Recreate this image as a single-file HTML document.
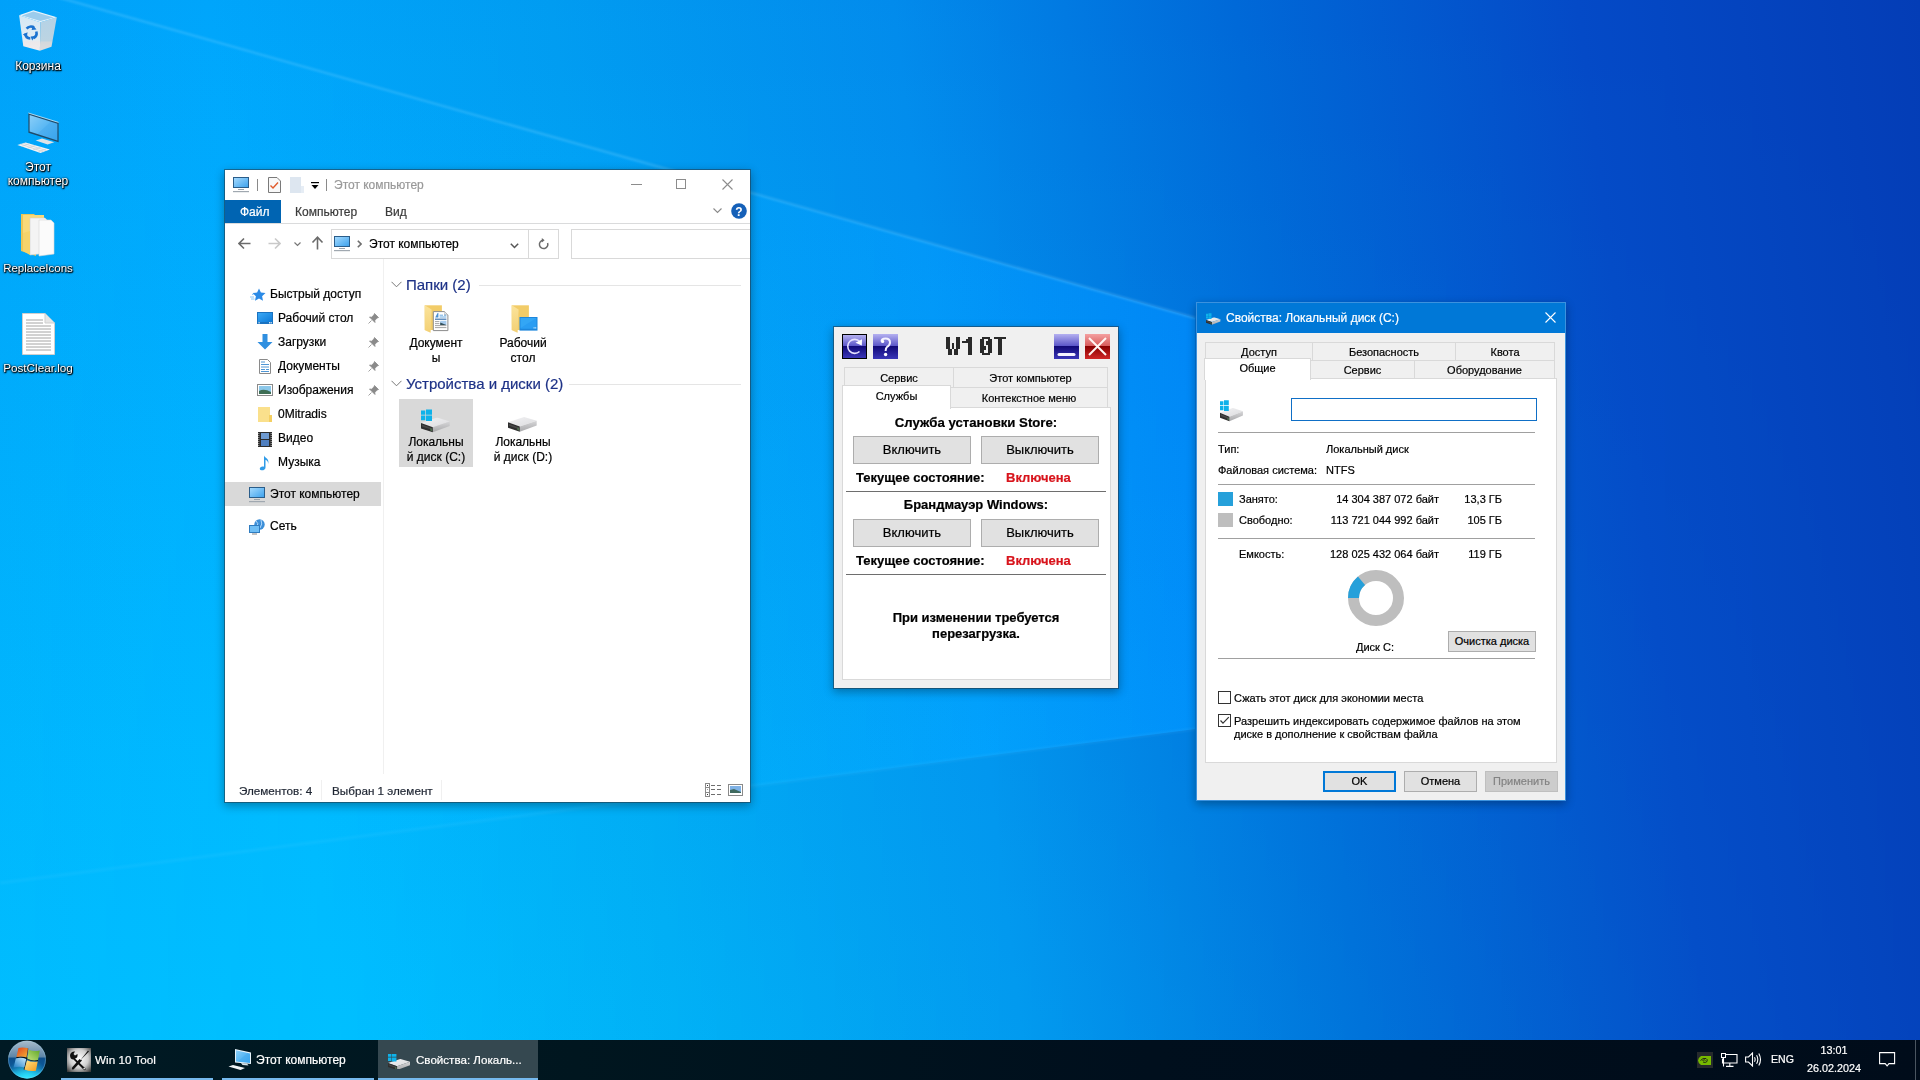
<!DOCTYPE html>
<html><head><meta charset="utf-8">
<style>
*{box-sizing:border-box}
html,body{margin:0;padding:0}
body{width:1920px;height:1080px;overflow:hidden;position:relative;font-family:"Liberation Sans",sans-serif;font-size:12px;color:#000;background:#0090ee}
.abs{position:absolute}
#wedge,#vgl{display:none}
@supports (mix-blend-mode:plus-lighter){#wedge,#vgl{display:block}}
#bg{position:absolute;left:0;top:0;width:1920px;height:1080px}
.win{position:absolute;overflow:hidden;background-clip:padding-box !important}
.t{position:absolute;white-space:nowrap;line-height:1;-webkit-text-stroke:0.2px currentColor}
/* desktop icons */
.dlabel{position:absolute;color:#fff;font-size:12px;text-align:center;line-height:14px;text-shadow:0 0 2px #000,1px 1px 1px #000,0 1px 2px #000}
</style></head>
<body>
<!-- BACKGROUND -->
<svg id="bg" width="1920" height="1080" viewBox="0 0 1920 1080">
  <defs>
    <linearGradient id="g0" gradientUnits="userSpaceOnUse" x1="0" y1="1080" x2="2023.4" y2="827.1">
      <stop offset="0" stop-color="#009ef8"/>
      <stop offset="0.1667" stop-color="#00a5fb"/>
      <stop offset="0.3333" stop-color="#019cf1"/>
      <stop offset="0.5" stop-color="#028bec"/>
      <stop offset="0.6667" stop-color="#0069d8"/>
      <stop offset="0.8333" stop-color="#044ac7"/>
      <stop offset="1" stop-color="#043db6"/>
    </linearGradient>
    <filter id="bl2" x="-10%" y="-10%" width="120%" height="120%"><feGaussianBlur stdDeviation="1.2"/></filter>
  </defs>
  <rect width="1920" height="1080" fill="url(#g0)"/>
</svg>
<div id="wedge" style="position:absolute;left:0;top:0;width:1195px;height:1080px;clip-path:polygon(0 -19px,1195px 318px,1195px 729px,0 883px);background:linear-gradient(90deg,rgb(0,0,0) 0%,rgb(0,2,3) 50%,rgb(0,8,10) 75%,rgb(0,12,16) 88%,rgb(0,18,24) 100%);mix-blend-mode:plus-lighter"></div>
<div id="vgl" style="position:absolute;left:0;top:0;width:1920px;height:1080px;background:linear-gradient(180deg,rgb(0,0,0),rgb(0,33,7));-webkit-mask-image:linear-gradient(90deg,#000,rgba(0,0,0,0.04));mask-image:linear-gradient(90deg,#000,rgba(0,0,0,0.04));mix-blend-mode:plus-lighter"></div>
<svg style="position:absolute;left:0;top:0" width="1920" height="1080">
  <defs><filter id="bl3" x="-10%" y="-50%" width="120%" height="200%"><feGaussianBlur stdDeviation="1.2"/></filter></defs>
  <line x1="0" y1="-19" x2="1195" y2="318" stroke="#8fdcff" stroke-opacity="0.3" stroke-width="2" filter="url(#bl3)"/>
  <line x1="0" y1="883" x2="1195" y2="729" stroke="#8fdcff" stroke-opacity="0.08" stroke-width="3" filter="url(#bl3)"/>
</svg>

<svg width="0" height="0" style="position:absolute"><defs>
 <linearGradient id="drR" x1="0" y1="0" x2="0" y2="1"><stop offset="0" stop-color="#d6d6d8"/><stop offset="1" stop-color="#a9a9ab"/></linearGradient>
 <linearGradient id="drT" x1="0" y1="0" x2="1" y2="1"><stop offset="0" stop-color="#f2f2f4"/><stop offset="1" stop-color="#dcdcde"/></linearGradient>
 <symbol id="drvbox" viewBox="0 0 30 16">
   <path d="M0 5.3 L16.1 0 L28.7 3.8 L11.8 9.6 Z" fill="url(#drT)"/>
   <path d="M11.8 9.6 L28.7 3.8 L28.7 8.4 L11.8 14.7 Z" fill="url(#drR)"/>
   <path d="M0 5.3 L11.8 9.6 L11.8 14.7 L0 10.8 Z" fill="#2e2e2e"/>
   <path d="M1 7 L10.8 10.6 L10.8 12.2 L1 8.8 Z" fill="#474747"/>
   <path d="M9.3 10.5 L11 11.1 L11 13.6 L9.3 13 Z" fill="#4d6e4d"/>
 </symbol>
 <symbol id="drvC" viewBox="0 0 30 24">
   <use href="#drvbox" x="0" y="8.6" width="30" height="16"/>
   <path d="M0 1.4 H4.3 V5.8 H0 Z M5 0.4 H11 V5.8 H5 Z M0 6.6 H4.3 V11.2 H0 Z M5 6.6 H11 V12 H5 Z" fill="#0fb2ea"/>
 </symbol>
</defs></svg>
<!-- DESKTOP ICONS -->
<div id="desktop">
 <svg class="abs" style="left:14px;top:6px" width="48" height="50" viewBox="0 0 48 50">
   <defs>
    <linearGradient id="rbF" x1="0" y1="0" x2="0" y2="1"><stop offset="0" stop-color="#d4e8f5"/><stop offset="0.7" stop-color="#e2edf3"/><stop offset="0.75" stop-color="#ece8ea"/><stop offset="1" stop-color="#f0ecee"/></linearGradient>
    <linearGradient id="rbR" x1="0" y1="0" x2="0" y2="1"><stop offset="0" stop-color="#b4d2e6"/><stop offset="0.7" stop-color="#bcd4e2"/><stop offset="0.75" stop-color="#d4d8dc"/><stop offset="1" stop-color="#dcdcde"/></linearGradient>
   </defs>
   <path d="M5.1 9.3 L26.4 16.2 L25.9 44.7 L9.3 40.3 Z" fill="url(#rbF)"/>
   <path d="M26.4 16.2 L42.8 11.3 L37.5 40.7 L25.9 44.7 Z" fill="url(#rbR)"/>
   <path d="M5.1 9.3 L19.4 4.2 L42.8 11.3 L26.4 16.2 Z" fill="#e8f4fb"/>
   <path d="M7.8 9.4 L19.4 5.6 L39.8 11.4 L26.4 15 Z" fill="#9cccec"/>
   <g fill="none" stroke="#1a72d0" stroke-width="2.6" stroke-linecap="butt">
     <path d="M12.6 22.6 A5.6 5.6 0 0 1 20 21.6"/>
     <path d="M22.3 25.5 A5.6 5.6 0 0 1 19.6 32"/>
     <path d="M16.3 32.5 A5.6 5.6 0 0 1 11.2 27.5"/>
   </g>
   <path d="M19 19.2 L22.5 23.6 L17.6 24 Z M21.5 30 L18.2 34.6 L16.6 30.4 Z M8.8 28.5 L13.6 26.2 L12.8 31 Z" fill="#1a72d0"/>
 </svg>
 <div class="dlabel" style="left:0;top:59px;width:76px">Корзина</div>
 <svg class="abs" style="left:14px;top:106px" width="48" height="52" viewBox="0 0 48 52">
   <defs><linearGradient id="mon" x1="0" y1="0" x2="1" y2="1"><stop offset="0" stop-color="#8ccff8"/><stop offset="0.5" stop-color="#5ab8f4"/><stop offset="0.52" stop-color="#4fb0f0"/><stop offset="1" stop-color="#38a4ee"/></linearGradient></defs>
   <path d="M21.7 34.6 L28 32.6 L40.2 36.2 L33.6 38.6 Z" fill="#dfe3e6"/>
   <path d="M14.4 7 L44.6 16.4 L44.6 36.2 L14.4 26.8 Z" fill="#1f4b6a"/>
   <path d="M15.6 9 L43.4 17.8 L43.4 34.5 L15.6 25.5 Z" fill="url(#mon)"/>
   <path d="M14.4 7 L44.6 16.4" stroke="#cfeefc" stroke-width="0.8"/>
   <path d="M3.4 39 L11.6 36.6 L35.9 43.6 L26.5 47 Z" fill="#f2f4f6"/>
   <path d="M6.4 38.1 L29.6 45.8 M9.2 37.3 L32.6 44.6 M7.8 40.4 L15.4 37.7 M13.5 42.2 L21 39.5 M19 44 L26.6 41.3 M24.4 45.8 L32 43" stroke="#c9ced3" stroke-width="0.7"/>
 </svg>
 <div class="dlabel" style="left:0;top:160px;width:76px">Этот<br>компьютер</div>
 <svg class="abs" style="left:20px;top:213px" width="36" height="44" viewBox="0 0 36 44">
   <path d="M1 1 H14 L16 3 V43 L1 38 Z" fill="#e9c659"/>
   <path d="M3 2 H24 V38 H3 Z" fill="#f8d97a"/>
   <path d="M10 5 H25 L28 8 V40 L10 42 Z" fill="#f4f4f4" stroke="#d0d0d0" stroke-width="0.6"/>
   <path d="M19 7 H31 L34 10 V41 L19 43 Z" fill="#fbfbfb" stroke="#d6d6d6" stroke-width="0.6"/>
   <path d="M3 20 L10 18 V42 L3 38 Z" fill="#f5d36b"/>
 </svg>
 <div class="dlabel" style="left:0;top:261px;width:76px;font-size:11.5px">ReplaceIcons</div>
 <svg class="abs" style="left:22px;top:313px" width="33" height="42" viewBox="0 0 33 42">
   <path d="M0.5 0.5 H23 L32.5 10 V41.5 H0.5 Z" fill="#fff" stroke="#cfcfcf"/>
   <path d="M23 0.5 V10 H32.5" fill="#e6e6e6" stroke="#cfcfcf"/>
   <g stroke="#9a9a9a" stroke-width="0.9"><path d="M4 7 H21 M4 10 H21 M4 13 H29 M4 16 H29 M4 19 H29 M4 22 H29 M4 25 H29 M4 28 H29 M4 31 H29 M4 34 H29 M4 37 H29"/></g>
 </svg>
 <div class="dlabel" style="left:0;top:361px;width:76px;font-size:11.7px">PostClear.log</div>
</div>

<!-- EXPLORER -->
<div class="win" id="explorer" style="left:224px;top:169px;width:527px;height:634px;border:1px solid rgba(40,50,60,0.5);background:#fff;box-shadow:0 3px 9px rgba(0,0,0,0.32)">
 <!-- title bar -->
 <svg class="abs" style="left:8px;top:7px" width="16" height="16" viewBox="0 0 16 16">
   <defs><linearGradient id="scr" x1="0" y1="0" x2="1" y2="1"><stop offset="0" stop-color="#a8dcff"/><stop offset="1" stop-color="#3aa0ec"/></linearGradient></defs>
   <rect x="0.5" y="0.5" width="15" height="10" fill="url(#scr)" stroke="#2a5d8a"/>
   <rect x="5" y="12" width="6" height="1" fill="#9aa4ad"/><rect x="0" y="14" width="16" height="1.2" fill="#a0a8b0"/>
 </svg>
 <div class="abs" style="left:32px;top:9px;width:1px;height:12px;background:#8a8a8a"></div>
 <svg class="abs" style="left:43px;top:7px" width="13" height="16" viewBox="0 0 13 16">
   <path d="M0.5 0.5 H9 L12.5 4 V15.5 H0.5 Z" fill="#f8f8f8" stroke="#7a7a7a"/>
   <path d="M2.5 8.5 L5 11 L10 5.5" fill="none" stroke="#e05a2b" stroke-width="1.4"/>
 </svg>
 <svg class="abs" style="left:65px;top:7px" width="14" height="16" viewBox="0 0 14 16">
   <rect x="0" y="0" width="11" height="16" fill="#dde6f0"/><rect x="11" y="9" width="3" height="7" fill="#e6edf5"/>
 </svg>
 <svg class="abs" style="left:86px;top:12px" width="8" height="8" viewBox="0 0 8 8">
   <rect x="0" y="0" width="8" height="1.2" fill="#000"/><path d="M0.5 3 H7.5 L4 7 Z" fill="#000"/>
 </svg>
 <div class="abs" style="left:101px;top:9px;width:1px;height:12px;background:#8a8a8a"></div>
 <div class="t" style="left:109px;top:9px;font-size:12px;color:#999">Этот компьютер</div>
 <div class="abs" style="left:406px;top:14px;width:11px;height:1px;background:#8c8c8c"></div>
 <div class="abs" style="left:451px;top:9px;width:10px;height:10px;border:1px solid #8c8c8c"></div>
 <svg class="abs" style="left:497px;top:9px" width="11" height="11" viewBox="0 0 11 11"><path d="M0.5 0.5 L10.5 10.5 M10.5 0.5 L0.5 10.5" stroke="#8c8c8c" stroke-width="1.1"/></svg>
 <!-- ribbon -->
 <div class="abs" style="left:0;top:30px;width:56px;height:23px;background:#0064b2"></div>
 <div class="t" style="left:15px;top:36px;color:#fff">Файл</div>
 <div class="t" style="left:70px;top:36px;color:#3b3b3b">Компьютер</div>
 <div class="t" style="left:160px;top:36px;color:#3b3b3b">Вид</div>
 <svg class="abs" style="left:488px;top:38px" width="9" height="6" viewBox="0 0 9 6"><path d="M0.5 0.5 L4.5 4.5 L8.5 0.5" fill="none" stroke="#8a8a8a" stroke-width="1.1"/></svg>
 <svg class="abs" style="left:506px;top:33px" width="16" height="16" viewBox="0 0 16 16"><circle cx="8" cy="8" r="7.8" fill="#1560b8"/><text x="8" y="12.6" text-anchor="middle" font-family="Liberation Sans" font-weight="bold" font-size="12" fill="#fff">?</text></svg>
 <div class="abs" style="left:0;top:53px;width:525px;height:1px;background:#dadbdc"></div>
 <!-- nav row -->
 <svg class="abs" style="left:13px;top:67px" width="13" height="13" viewBox="0 0 13 13"><path d="M12.5 6.5 H1.5 M6 1.5 L1 6.5 L6 11.5" fill="none" stroke="#6b6b6b" stroke-width="1.6"/></svg>
 <svg class="abs" style="left:43px;top:67px" width="13" height="13" viewBox="0 0 13 13"><path d="M0.5 6.5 H11.5 M7 1.5 L12 6.5 L7 11.5" fill="none" stroke="#c9c9c9" stroke-width="1.6"/></svg>
 <svg class="abs" style="left:69px;top:72px" width="7" height="5" viewBox="0 0 7 5"><path d="M0.5 0.5 L3.5 3.5 L6.5 0.5" fill="none" stroke="#777" stroke-width="1.2"/></svg>
 <svg class="abs" style="left:86px;top:66px" width="13" height="14" viewBox="0 0 13 14"><path d="M6.5 13.5 V2 M1.5 6.5 L6.5 1.2 L11.5 6.5" fill="none" stroke="#6b6b6b" stroke-width="1.6"/></svg>
 <div class="abs" style="left:106px;top:59px;width:228px;height:30px;border:1px solid #d9d9d9"></div>
 <div class="abs" style="left:303px;top:59px;width:1px;height:30px;background:#d9d9d9"></div>
 <svg class="abs" style="left:109px;top:66px" width="16" height="16" viewBox="0 0 16 16">
   <rect x="0.5" y="0.5" width="15" height="10" fill="url(#scr)" stroke="#2a5d8a"/>
   <rect x="5" y="12" width="6" height="1" fill="#9aa4ad"/><rect x="0" y="14" width="16" height="1.2" fill="#a0a8b0"/>
 </svg>
 <svg class="abs" style="left:132px;top:70px" width="5" height="8" viewBox="0 0 5 8"><path d="M0.8 0.8 L4 4 L0.8 7.2" fill="none" stroke="#6e6e6e" stroke-width="1.6"/></svg>
 <div class="t" style="left:144px;top:68px;color:#000">Этот компьютер</div>
 <svg class="abs" style="left:285px;top:73px" width="9" height="6" viewBox="0 0 9 6"><path d="M0.8 0.8 L4.5 4.5 L8.2 0.8" fill="none" stroke="#555" stroke-width="1.5"/></svg>
 <svg class="abs" style="left:313px;top:68px" width="12" height="12" viewBox="0 0 12 12"><path d="M5.2 2.2 A4.2 4.2 0 1 0 9.6 5" fill="none" stroke="#6b6b6b" stroke-width="1.5"/><path d="M3.8 0 L6.6 2.3 L3.8 4.6 Z" fill="#6b6b6b"/></svg>
 <div class="abs" style="left:346px;top:59px;width:181px;height:30px;border:1px solid #d9d9d9;border-right:none"></div>
 <!-- nav pane -->
 <div class="abs" style="left:158px;top:89px;width:1px;height:515px;background:#f0f0f0"></div>
 <svg class="abs" style="left:25px;top:118px" width="16" height="14" viewBox="0 0 16 14"><path d="M9 0.5 L10.9 4.6 L15.5 5.1 L12.1 8.2 L13 12.8 L9 10.5 L5 12.8 L5.9 8.2 L2.5 5.1 L7.1 4.6 Z" fill="#2b8ae6"/><path d="M0 9 H4 M1 11 H4.5 M2 6.5 H3.5" stroke="#7fc1f5" stroke-width="0.9"/></svg>
 <div class="t" style="left:45px;top:118px;color:#000">Быстрый доступ</div>
 <svg class="abs" style="left:32px;top:142px" width="16" height="12" viewBox="0 0 16 12"><defs><linearGradient id="dsk" x1="0" y1="0" x2="1" y2="1"><stop offset="0" stop-color="#3ba8f5"/><stop offset="1" stop-color="#0c7ad8"/></linearGradient></defs><rect x="0" y="0" width="16" height="12" fill="#1a72c0"/><rect x="1" y="1" width="14" height="9" fill="url(#dsk)"/><rect x="1.5" y="10.2" width="1.2" height="1.2" fill="#fff"/><rect x="12" y="10.2" width="1.2" height="1.2" fill="#fff"/><rect x="13.6" y="10.2" width="1.2" height="1.2" fill="#fff"/></svg>
 <div class="t" style="left:53px;top:142px;color:#000">Рабочий стол</div>
 <svg class="abs" style="left:32px;top:164px" width="16" height="16" viewBox="0 0 16 16"><path d="M5.5 0 H10.5 V8 H15.5 L8 15.5 L0.5 8 H5.5 Z" fill="#2f8fe0"/></svg>
 <div class="t" style="left:53px;top:166px;color:#000">Загрузки</div>
 <svg class="abs" style="left:34px;top:189px" width="12" height="15" viewBox="0 0 12 15"><path d="M0.5 0.5 H8.5 L11.5 3.5 V14.5 H0.5 Z" fill="#fff" stroke="#8a8a8a"/><path d="M2 3 H6 M2 5.5 H10 M2 8 H10 M2 10.5 H6 M7 10.5 H10 M2 12.5 H10" stroke="#3b8ad0" stroke-width="0.9"/></svg>
 <div class="t" style="left:53px;top:190px;color:#000">Документы</div>
 <svg class="abs" style="left:32px;top:214px" width="16" height="12" viewBox="0 0 16 12"><rect x="0.5" y="0.5" width="15" height="11" fill="#fff" stroke="#8a8a8a"/><rect x="2" y="2" width="12" height="8" fill="#8cc8ea"/><path d="M2 7 Q7 4 14 8 V10 H2 Z" fill="#3e6e55"/></svg>
 <div class="t" style="left:53px;top:214px;color:#000">Изображения</div>
 <svg class="abs" style="left:33px;top:237px" width="14" height="15" viewBox="0 0 14 15"><rect x="0" y="0" width="12" height="15" fill="#fae08c"/><rect x="11" y="8" width="3" height="7" fill="#f4cf62"/></svg>
 <div class="t" style="left:53px;top:238px;color:#000">0Mitradis</div>
 <svg class="abs" style="left:33px;top:262px" width="14" height="15" viewBox="0 0 14 15"><rect x="0" y="0" width="14" height="15" fill="#2c2c2c"/><rect x="3" y="1" width="8" height="6" fill="#6e9ad0"/><rect x="3" y="8" width="8" height="6" fill="#4f7fc0"/><path d="M0.8 1 V14 M13.2 1 V14" stroke="#ddd" stroke-width="0.8" stroke-dasharray="1 1"/></svg>
 <div class="t" style="left:53px;top:262px;color:#000">Видео</div>
 <svg class="abs" style="left:34px;top:285px" width="12" height="16" viewBox="0 0 12 16"><path d="M5 0.5 C6 3 11 4 9 9 C9.5 6.5 7.5 5 6.5 4.8 V12.5 C6.5 14.5 4.5 15.5 2.5 15.3 C0.5 15 0.3 13.3 1.5 12.2 C2.6 11.2 4.3 11.3 5 11.8 V0.5 Z" fill="#2f9be8"/></svg>
 <div class="t" style="left:53px;top:286px;color:#000">Музыка</div>
 <!-- pins -->
 <svg class="abs" style="left:143px;top:143px" width="11" height="11" viewBox="0 0 11 11"><path d="M6.5 0.5 L10.5 4.5 L9 5 L6.8 7.5 L7 9.5 L1.5 4 L3.5 4.2 L6 2 Z M3.5 7.5 L0.5 10.5" fill="#8a8a8a" stroke="#8a8a8a" stroke-width="0.8"/></svg>
 <svg class="abs" style="left:143px;top:167px" width="11" height="11" viewBox="0 0 11 11"><path d="M6.5 0.5 L10.5 4.5 L9 5 L6.8 7.5 L7 9.5 L1.5 4 L3.5 4.2 L6 2 Z M3.5 7.5 L0.5 10.5" fill="#8a8a8a" stroke="#8a8a8a" stroke-width="0.8"/></svg>
 <svg class="abs" style="left:143px;top:191px" width="11" height="11" viewBox="0 0 11 11"><path d="M6.5 0.5 L10.5 4.5 L9 5 L6.8 7.5 L7 9.5 L1.5 4 L3.5 4.2 L6 2 Z M3.5 7.5 L0.5 10.5" fill="#8a8a8a" stroke="#8a8a8a" stroke-width="0.8"/></svg>
 <svg class="abs" style="left:143px;top:215px" width="11" height="11" viewBox="0 0 11 11"><path d="M6.5 0.5 L10.5 4.5 L9 5 L6.8 7.5 L7 9.5 L1.5 4 L3.5 4.2 L6 2 Z M3.5 7.5 L0.5 10.5" fill="#8a8a8a" stroke="#8a8a8a" stroke-width="0.8"/></svg>
 <div class="abs" style="left:0;top:312px;width:156px;height:24px;background:#d9d9d9"></div>
 <svg class="abs" style="left:24px;top:317px" width="16" height="16" viewBox="0 0 16 16">
   <rect x="0.5" y="0.5" width="15" height="10" fill="url(#scr)" stroke="#2a5d8a"/>
   <rect x="5" y="12" width="6" height="1" fill="#9aa4ad"/><rect x="0" y="14" width="16" height="1.2" fill="#a0a8b0"/>
 </svg>
 <div class="t" style="left:45px;top:318px;color:#000">Этот компьютер</div>
 <svg class="abs" style="left:24px;top:349px" width="16" height="16" viewBox="0 0 16 16"><circle cx="10.5" cy="5.5" r="5.2" fill="#3c8fd8"/><path d="M7 2 Q10 4 8 8 M12 1 Q14 5 11 9" stroke="#bfe0ff" stroke-width="0.9" fill="none"/><rect x="0.5" y="6.5" width="10" height="7" fill="#6fbef5" stroke="#2f7cc0"/><rect x="3" y="14.5" width="5" height="1" fill="#888"/></svg>
 <div class="t" style="left:45px;top:350px;color:#000">Сеть</div>
 <!-- content -->
 <svg class="abs" style="left:166px;top:111px" width="11" height="7" viewBox="0 0 11 7"><path d="M0.5 0.8 L5.5 5.8 L10.5 0.8" fill="none" stroke="#777" stroke-width="1"/></svg>
 <div class="t" style="left:181px;top:107px;font-size:15px;color:#1e3287">Папки (2)</div>
 <div class="abs" style="left:254px;top:115px;width:262px;height:1px;background:#e5e5e5"></div>
 <svg class="abs" style="left:193px;top:130px" width="32" height="36" viewBox="0 0 32 36">
   <defs><linearGradient id="fldF" x1="0" y1="0" x2="0" y2="1"><stop offset="0" stop-color="#fbe39a"/><stop offset="1" stop-color="#f3d074"/></linearGradient></defs>
   <path d="M6.7 5.3 H23.9 V30 H6.7 Z" fill="#f2cc68"/>
   <path d="M6.7 5.3 L13.6 9.6 L12.6 32.8 L6.9 30.2 Z" fill="url(#fldF)"/>
   <path d="M15.3 11.6 H26.6 L29.9 14.9 V30.6 H15.3 Z" fill="#fff" stroke="#8c8c8c" stroke-width="1"/>
   <path d="M26.6 11.6 V14.9 H29.9" fill="#e6e6e6" stroke="#b0b0b0" stroke-width="0.6"/>
   <path d="M17.2 17.6 L19.6 13 L20.4 13 L20.4 17.6 Z" fill="#4a8fd0"/>
   <path d="M21.6 15.2 H25 M26 15.2 H28.2 M21.6 17 H28.4" stroke="#5aa0dc" stroke-width="0.9"/>
   <rect x="17" y="18.6" width="11.4" height="1.2" fill="#3c74b0"/>
   <path d="M17 21.6 H21.4 M17 23.6 H21.4 M17 25.6 H28.4 M17 27.6 H28.4" stroke="#9a9a9a" stroke-width="0.9"/>
   <rect x="22.2" y="20.8" width="6.2" height="4.2" fill="#a8ccee"/>
   <path d="M22.2 22.4 Q24 23 28.4 25 H22.2 Z" fill="#34505a"/>
 </svg>
 <div class="t" style="left:171px;top:167px;width:80px;text-align:center;color:#000">Документ</div>
 <div class="t" style="left:171px;top:182px;width:80px;text-align:center;color:#000">ы</div>
 <svg class="abs" style="left:280px;top:130px" width="34" height="36" viewBox="0 0 34 36">
   <path d="M6.7 5.3 H23.9 V30 H6.7 Z" fill="#f2cc68"/>
   <path d="M6.7 5.3 L13.6 9.6 L12.6 32.8 L6.9 30.2 Z" fill="url(#fldF)"/>
   <rect x="14.5" y="17" width="18" height="13.6" fill="#1d86dc"/>
   <path d="M15.5 18 H31.5 V28.8 H15.5 Z" fill="#2a9df2"/>
   <path d="M15.5 18 H31.5 L15.5 28 Z" fill="#3aabf6" opacity="0.6"/>
   <rect x="28.6" y="27.4" width="1" height="1" fill="#fff"/><rect x="30.2" y="27.4" width="1" height="1" fill="#fff"/>
 </svg>
 <div class="t" style="left:258px;top:167px;width:80px;text-align:center;color:#000">Рабочий</div>
 <div class="t" style="left:258px;top:182px;width:80px;text-align:center;color:#000">стол</div>
 <svg class="abs" style="left:166px;top:210px" width="11" height="7" viewBox="0 0 11 7"><path d="M0.5 0.8 L5.5 5.8 L10.5 0.8" fill="none" stroke="#777" stroke-width="1"/></svg>
 <div class="t" style="left:181px;top:206px;font-size:15px;color:#1e3287">Устройства и диски (2)</div>
 <div class="abs" style="left:344px;top:214px;width:172px;height:1px;background:#e5e5e5"></div>
 <div class="abs" style="left:174px;top:229px;width:74px;height:68px;background:#d9d9d9"></div>
 <svg class="abs" style="left:196px;top:239px" width="30" height="24" viewBox="0 0 30 24"><use href="#drvC"/></svg>
 <div class="t" style="left:171px;top:266px;width:80px;text-align:center;color:#000">Локальны</div>
 <div class="t" style="left:171px;top:281px;width:80px;text-align:center;color:#000">й диск (C:)</div>
 <svg class="abs" style="left:283px;top:247px" width="30" height="16" viewBox="0 0 30 16"><use href="#drvbox"/></svg>
 <div class="t" style="left:258px;top:266px;width:80px;text-align:center;color:#000">Локальны</div>
 <div class="t" style="left:258px;top:281px;width:80px;text-align:center;color:#000">й диск (D:)</div>
 <!-- status bar -->
 <div class="t" style="left:14px;top:615px;color:#1f2633;font-size:11.7px">Элементов: 4</div>
 <div class="abs" style="left:96px;top:610px;width:1px;height:20px;background:#f0f0f0"></div>
 <div class="t" style="left:107px;top:615px;color:#1f2633;font-size:11.7px">Выбран 1 элемент</div>
 <div class="abs" style="left:216px;top:610px;width:1px;height:20px;background:#f0f0f0"></div>
 <svg class="abs" style="left:480px;top:613px" width="17" height="14" viewBox="0 0 17 14" shape-rendering="crispEdges"><path d="M0 0 H5 V14 H0 Z M1 1 V4 H4 V1 Z M1 5 V9 H4 V5 Z M1 10 V13 H4 V10 Z" fill="#8a8a8a" fill-rule="evenodd"/><rect x="2" y="2" width="1" height="1" fill="#333"/><rect x="2" y="6" width="1" height="1" fill="#999"/><rect x="2" y="11" width="1" height="1" fill="#333"/><path d="M6 2 H10 V3 H6 Z M12 2 H16 V3 H12 Z M6 6 H10 V7 H6 Z M12 6 H16 V7 H12 Z M6 11 H10 V12 H6 Z M12 11 H16 V12 H12 Z" fill="#6e6e6e"/></svg>
 <svg class="abs" style="left:503px;top:614px" width="15" height="12" viewBox="0 0 15 12" shape-rendering="crispEdges"><path d="M0 0 H15 V12 H0 Z M1 1 V11 H14 V1 Z" fill="#8a8a8a" fill-rule="evenodd"/><rect x="1" y="1" width="13" height="10" fill="#fff"/><rect x="2" y="2" width="11" height="7" fill="#7fb2e6"/><path d="M2 6 L6 5 L13 8 V9 H2 Z" fill="#3f6a5f" shape-rendering="geometricPrecision"/></svg>
</div>

<!-- W10T -->
<div class="win" id="w10t" style="left:833px;top:326px;width:286px;height:363px;border:1px solid rgba(40,50,60,0.5);background:#f0f0f0;box-shadow:0 3px 9px rgba(0,0,0,0.32)">
 <svg class="abs" style="left:0;top:0;width:0;height:0"><defs>
  <linearGradient id="bb" x1="0" y1="0" x2="0" y2="1"><stop offset="0" stop-color="#b4b0f0"/><stop offset="0.48" stop-color="#5a55c8"/><stop offset="0.5" stop-color="#120a78"/><stop offset="1" stop-color="#3a36b8"/></linearGradient>
  <linearGradient id="rb" x1="0" y1="0" x2="0" y2="1"><stop offset="0" stop-color="#f4a0a0"/><stop offset="0.48" stop-color="#d85a5a"/><stop offset="0.5" stop-color="#8a0000"/><stop offset="1" stop-color="#d02828"/></linearGradient>
 </defs></svg>
 <svg class="abs" style="left:8px;top:7px" width="25" height="25" viewBox="0 0 25 25"><rect x="0" y="0" width="25" height="25" fill="#000"/><rect x="1" y="1" width="23" height="23" fill="url(#bb)"/><path d="M17.5 17.5 A7 7 0 1 1 17.8 7.5" fill="none" stroke="#e6e2ff" stroke-width="1.6"/><path d="M13.5 8.8 L20 5.2 L19.8 11.5 Z" fill="#fff"/></svg>
 <svg class="abs" style="left:39px;top:7px" width="25" height="25" viewBox="0 0 25 25"><rect x="0" y="0" width="25" height="25" fill="url(#bb)"/><path d="M8.5 7.5 Q8.5 4.5 12.5 4.5 Q17 4.5 17 8.5 Q17 11 14 13 Q12.8 14 12.6 17" fill="none" stroke="#f4f2ff" stroke-width="2"/><circle cx="9.6" cy="7.4" r="1.6" fill="#fff"/><circle cx="12.6" cy="20.5" r="1.7" fill="#fff"/></svg>
 <svg class="abs" style="left:112px;top:10px" width="62" height="18" viewBox="0 0 62 18" shape-rendering="crispEdges">
   <g fill="#2a2a2a">
    <rect x="0" y="0" width="4" height="12"/><rect x="10" y="0" width="4" height="12"/><rect x="6" y="6" width="2" height="6"/><rect x="2" y="12" width="4" height="6"/><rect x="8" y="12" width="4" height="6"/>
    <rect x="22" y="0" width="4" height="18"/><rect x="16" y="4" width="6" height="2"/><rect x="20" y="2" width="2" height="2"/>
    <rect x="36" y="0" width="8" height="2"/><rect x="36" y="16" width="8" height="2"/><rect x="34" y="2" width="4" height="14"/><rect x="42" y="2" width="4" height="14"/><rect x="40" y="4" width="2" height="4"/><rect x="38" y="9" width="2" height="4"/>
    <rect x="48" y="0" width="12" height="2"/><rect x="52" y="2" width="4" height="16"/>
   </g>
 </svg>
 <svg class="abs" style="left:220px;top:7px" width="25" height="25" viewBox="0 0 25 25"><rect x="0" y="0" width="25" height="25" fill="url(#bb)"/><rect x="3.5" y="19" width="18" height="3" rx="1.5" fill="#f4f2ff"/></svg>
 <svg class="abs" style="left:251px;top:7px" width="25" height="25" viewBox="0 0 25 25"><rect x="0" y="0" width="25" height="25" fill="url(#rb)"/><path d="M4 4 L21 21 M21 4 L4 21" stroke="#fff6f4" stroke-width="2"/></svg>
 <!-- tabs -->
 <div class="abs" style="left:10px;top:40px;width:110px;height:21px;background:#f0f0f0;border:1px solid #d9d9d9;border-bottom:none"></div>
 <div class="abs" style="left:119px;top:40px;width:155px;height:21px;background:#f0f0f0;border:1px solid #d9d9d9;border-bottom:none"></div>
 <div class="t" style="left:10px;top:46px;width:110px;text-align:center;font-size:11px;color:#000">Сервис</div>
 <div class="t" style="left:119px;top:46px;width:155px;text-align:center;font-size:11px;color:#000">Этот компьютер</div>
 <div class="abs" style="left:8px;top:80px;width:269px;height:273px;background:#fff;border:1px solid #d9d9d9"></div>
 <div class="abs" style="left:116px;top:60px;width:158px;height:21px;background:#f0f0f0;border:1px solid #d9d9d9"></div>
 <div class="t" style="left:116px;top:66px;width:158px;text-align:center;font-size:11px;color:#000">Контекстное меню</div>
 <div class="abs" style="left:8px;top:58px;width:109px;height:24px;background:#fff;border:1px solid #d9d9d9;border-bottom:none"></div>
 <div class="t" style="left:8px;top:64px;width:109px;text-align:center;font-size:11px;color:#000">Службы</div>
 <!-- content -->
 <div class="t" style="left:0;top:89px;width:284px;text-align:center;font-size:13.2px;font-weight:bold;color:#000">Служба установки Store:</div>
 <div class="abs" style="left:19px;top:109px;width:118px;height:28px;background:#e1e1e1;border:1px solid #adadad"></div>
 <div class="t" style="left:19px;top:116px;width:118px;text-align:center;font-size:13px;color:#000">Включить</div>
 <div class="abs" style="left:147px;top:109px;width:118px;height:28px;background:#e1e1e1;border:1px solid #adadad"></div>
 <div class="t" style="left:147px;top:116px;width:118px;text-align:center;font-size:13px;color:#000">Выключить</div>
 <div class="t" style="left:22px;top:144px;font-size:13px;font-weight:bold;color:#000">Текущее состояние:</div>
 <div class="t" style="left:172px;top:144px;font-size:13px;font-weight:bold;color:#d8141c">Включена</div>
 <div class="abs" style="left:12px;top:164px;width:260px;height:1px;background:#6e6e6e"></div>
 <div class="t" style="left:0;top:171px;width:284px;text-align:center;font-size:13px;font-weight:bold;color:#000">Брандмауэр Windows:</div>
 <div class="abs" style="left:19px;top:192px;width:118px;height:28px;background:#e1e1e1;border:1px solid #adadad"></div>
 <div class="t" style="left:19px;top:199px;width:118px;text-align:center;font-size:13px;color:#000">Включить</div>
 <div class="abs" style="left:147px;top:192px;width:118px;height:28px;background:#e1e1e1;border:1px solid #adadad"></div>
 <div class="t" style="left:147px;top:199px;width:118px;text-align:center;font-size:13px;color:#000">Выключить</div>
 <div class="t" style="left:22px;top:227px;font-size:13px;font-weight:bold;color:#000">Текущее состояние:</div>
 <div class="t" style="left:172px;top:227px;font-size:13px;font-weight:bold;color:#d8141c">Включена</div>
 <div class="abs" style="left:12px;top:247px;width:260px;height:1px;background:#6e6e6e"></div>
 <div class="t" style="left:0;top:283px;width:284px;text-align:center;font-size:13px;font-weight:bold;color:#000;line-height:16px">При изменении требуется<br>перезагрузка.</div>
</div>

<!-- PROPERTIES -->
<div class="win" id="props" style="left:1196px;top:302px;width:370px;height:499px;border:1px solid #3c92de;background:#f0f0f0;box-shadow:0 3px 9px rgba(0,0,0,0.32)">
 <div class="abs" style="left:0;top:0;width:368px;height:30px;background:#0078d7"></div>
 <svg class="abs" style="left:9px;top:10px" width="15" height="12" viewBox="0 0 30 24"><use href="#drvC"/></svg>
 <div class="t" style="left:29px;top:9px;font-size:12px;color:#fff">Свойства: Локальный диск (C:)</div>
 <svg class="abs" style="left:348px;top:9px" width="11" height="11" viewBox="0 0 11 11"><path d="M0.5 0.5 L10.5 10.5 M10.5 0.5 L0.5 10.5" stroke="#fff" stroke-width="1.1"/></svg>
 <!-- tabs row1 -->
 <div class="abs" style="left:8px;top:39px;width:108px;height:19px;background:#f0f0f0;border:1px solid #d9d9d9;border-bottom:none"></div>
 <div class="abs" style="left:115px;top:39px;width:144px;height:19px;background:#f0f0f0;border:1px solid #d9d9d9;border-bottom:none"></div>
 <div class="abs" style="left:258px;top:39px;width:100px;height:19px;background:#f0f0f0;border:1px solid #d9d9d9;border-bottom:none"></div>
 <div class="t" style="left:8px;top:44px;width:108px;text-align:center;font-size:11px;color:#000">Доступ</div>
 <div class="t" style="left:115px;top:44px;width:144px;text-align:center;font-size:11px;color:#000">Безопасность</div>
 <div class="t" style="left:258px;top:44px;width:100px;text-align:center;font-size:11px;color:#000">Квота</div>
 <!-- panel -->
 <div class="abs" style="left:8px;top:75px;width:352px;height:385px;background:#fff;border:1px solid #d9d9d9"></div>
 <div class="abs" style="left:113px;top:57px;width:105px;height:19px;background:#f0f0f0;border:1px solid #d9d9d9"></div>
 <div class="abs" style="left:217px;top:57px;width:141px;height:19px;background:#f0f0f0;border:1px solid #d9d9d9"></div>
 <div class="t" style="left:113px;top:62px;width:105px;text-align:center;font-size:11px;color:#000">Сервис</div>
 <div class="t" style="left:217px;top:62px;width:141px;text-align:center;font-size:11px;color:#000">Оборудование</div>
 <div class="abs" style="left:7px;top:55px;width:107px;height:22px;background:#fff;border:1px solid #d9d9d9;border-bottom:none"></div>
 <div class="t" style="left:7px;top:60px;width:107px;text-align:center;font-size:11px;color:#000">Общие</div>
 <!-- content -->
 <svg class="abs" style="left:23px;top:97px" width="24" height="22" viewBox="0 0 30 24" preserveAspectRatio="none"><use href="#drvC"/></svg>
 <div class="abs" style="left:94px;top:95px;width:246px;height:23px;border:1px solid #0f6fc6;background:#fff"></div>
 <div class="abs" style="left:21px;top:129px;width:317px;height:1px;background:#a0a0a0"></div>
 <div class="t" style="left:21px;top:141px;font-size:11px;color:#000">Тип:</div>
 <div class="t" style="left:129px;top:141px;font-size:11px;color:#000">Локальный диск</div>
 <div class="t" style="left:21px;top:162px;font-size:11px;color:#000">Файловая система:</div>
 <div class="t" style="left:129px;top:162px;font-size:11px;color:#000">NTFS</div>
 <div class="abs" style="left:21px;top:181px;width:317px;height:1px;background:#a0a0a0"></div>
 <div class="abs" style="left:21px;top:189px;width:15px;height:14px;background:#26a0da"></div>
 <div class="t" style="left:42px;top:191px;font-size:11px;color:#000">Занято:</div>
 <div class="t" style="left:100px;top:191px;width:142px;text-align:right;font-size:11px;color:#000">14 304 387 072 байт</div>
 <div class="t" style="left:250px;top:191px;width:55px;text-align:right;font-size:11px;color:#000">13,3 ГБ</div>
 <div class="abs" style="left:21px;top:210px;width:15px;height:14px;background:#bebebe"></div>
 <div class="t" style="left:42px;top:212px;font-size:11px;color:#000">Свободно:</div>
 <div class="t" style="left:100px;top:212px;width:142px;text-align:right;font-size:11px;color:#000">113 721 044 992 байт</div>
 <div class="t" style="left:250px;top:212px;width:55px;text-align:right;font-size:11px;color:#000">105 ГБ</div>
 <div class="abs" style="left:21px;top:235px;width:317px;height:1px;background:#a0a0a0"></div>
 <div class="t" style="left:42px;top:246px;font-size:11px;color:#000">Емкость:</div>
 <div class="t" style="left:100px;top:246px;width:142px;text-align:right;font-size:11px;color:#000">128 025 432 064 байт</div>
 <div class="t" style="left:250px;top:246px;width:55px;text-align:right;font-size:11px;color:#000">119 ГБ</div>
 <svg class="abs" style="left:150px;top:266px" width="58" height="58" viewBox="0 0 58 58">
   <circle cx="29" cy="29" r="22.5" fill="none" stroke="#bebebe" stroke-width="11"/>
   <path d="M6.5 29 A22.5 22.5 0 0 1 14.5 11.8" fill="none" stroke="#26a0da" stroke-width="11"/>
 </svg>
 <div class="t" style="left:128px;top:339px;width:100px;text-align:center;font-size:11px;color:#000">Диск C:</div>
 <div class="abs" style="left:251px;top:328px;width:88px;height:21px;background:#e1e1e1;border:1px solid #adadad"></div>
 <div class="t" style="left:251px;top:333px;width:88px;text-align:center;font-size:11px;color:#000">Очистка диска</div>
 <div class="abs" style="left:21px;top:355px;width:317px;height:1px;background:#a0a0a0"></div>
 <div class="abs" style="left:21px;top:388px;width:13px;height:13px;border:1px solid #333;background:#fff"></div>
 <div class="t" style="left:37px;top:390px;font-size:11px;color:#000">Сжать этот диск для экономии места</div>
 <div class="abs" style="left:21px;top:411px;width:13px;height:13px;border:1px solid #333;background:#fff"></div>
 <svg class="abs" style="left:22px;top:412px" width="11" height="11" viewBox="0 0 11 11"><path d="M1.5 5.5 L4 8.2 L9.8 2.2" fill="none" stroke="#333" stroke-width="1.2"/></svg>
 <div class="t" style="left:37px;top:412px;font-size:11px;color:#000;line-height:12.5px">Разрешить индексировать содержимое файлов на этом<br>диске в дополнение к свойствам файла</div>
 <!-- buttons -->
 <div class="abs" style="left:126px;top:468px;width:73px;height:21px;background:#e1e1e1;border:2px solid #0078d7"></div>
 <div class="t" style="left:126px;top:473px;width:73px;text-align:center;font-size:11px;color:#000">OK</div>
 <div class="abs" style="left:207px;top:468px;width:73px;height:21px;background:#e1e1e1;border:1px solid #adadad"></div>
 <div class="t" style="left:207px;top:473px;width:73px;text-align:center;font-size:11px;color:#000">Отмена</div>
 <div class="abs" style="left:288px;top:468px;width:73px;height:21px;background:#cccccc;border:1px solid #bfbfbf"></div>
 <div class="t" style="left:288px;top:473px;width:73px;text-align:center;font-size:11px;color:#838383">Применить</div>
</div>

<!-- TASKBAR -->
<div id="taskbar" class="abs" style="left:0;top:1040px;width:1920px;height:40px;background:linear-gradient(90deg,#001a24 0%,#00161f 30%,#000f1d 60%,#000c1a 100%)">
 <svg class="abs" style="left:4px;top:0px" width="46" height="40" viewBox="0 0 46 40">
   <defs>
     <linearGradient id="orbB" x1="0" y1="0" x2="0" y2="1"><stop offset="0" stop-color="#a9bccb"/><stop offset="0.42" stop-color="#5f86a8"/><stop offset="0.47" stop-color="#0d4f8c"/><stop offset="0.74" stop-color="#0d5c9c"/><stop offset="0.9" stop-color="#12a6dc"/><stop offset="1" stop-color="#18d6f8"/></linearGradient>
     <radialGradient id="orbG" cx="0.5" cy="1" r="0.55"><stop offset="0" stop-color="#30e8ff" stop-opacity="0.9"/><stop offset="1" stop-color="#30e8ff" stop-opacity="0"/></radialGradient>
     <linearGradient id="fr" x1="0" y1="0" x2="1" y2="1"><stop offset="0" stop-color="#e0401e"/><stop offset="1" stop-color="#f5b335"/></linearGradient>
     <linearGradient id="fg" x1="1" y1="0" x2="0" y2="1"><stop offset="0" stop-color="#5ea628"/><stop offset="1" stop-color="#c2e27a"/></linearGradient>
     <linearGradient id="fb" x1="0" y1="1" x2="1" y2="0"><stop offset="0" stop-color="#1f7cc4"/><stop offset="1" stop-color="#c8ecff"/></linearGradient>
     <linearGradient id="fy" x1="1" y1="1" x2="0" y2="0"><stop offset="0" stop-color="#f39a1a"/><stop offset="1" stop-color="#ffe68a"/></linearGradient>
   </defs>
   <circle cx="23" cy="19.6" r="18.9" fill="url(#orbB)"/>
   <circle cx="23" cy="19.6" r="18.9" fill="url(#orbG)"/>
   <circle cx="23" cy="19.6" r="18.5" fill="none" stroke="#9fd6ee" stroke-opacity="0.45" stroke-width="0.8"/>
   <path d="M12.4 17.6 Q18 16.4 22.8 18.2 Q28 21 34 20.6 M23.6 8.4 L20.4 29.6" stroke="#06121c" stroke-width="1.4" fill="none"/>
   <path d="M14.5 8 Q19 7 24 8.3 L22.5 17.4 Q18 16 12.4 17 Z" fill="url(#fr)"/>
   <path d="M24.8 9.8 Q30 11.8 35.8 10.4 L34 20 Q28.6 21.4 23.3 18.8 Z" fill="url(#fg)"/>
   <path d="M11.8 18.4 Q17 17.1 22.2 19 L20.4 27.4 Q15 26.2 9.6 27.6 Z" fill="url(#fb)"/>
   <path d="M23 20.2 Q28.2 22.6 33.7 21.4 L31.9 30.8 Q26 31.8 20.4 29.6 Z" fill="url(#fy)"/>
 </svg>
 <!-- Win 10 Tool -->
 <svg class="abs" style="left:67px;top:8px" width="24" height="24" viewBox="0 0 24 24">
   <defs><radialGradient id="tg" cx="0.5" cy="0.45" r="0.7"><stop offset="0" stop-color="#ffffff"/><stop offset="0.55" stop-color="#cfcfcf"/><stop offset="1" stop-color="#3a3a3a"/></radialGradient></defs>
   <rect width="24" height="24" fill="url(#tg)"/>
   <path d="M3 7 Q4 3 8 3.5 L6.5 6 L8 7.5 L10.5 6 Q11 10 8 10.5 L18 20 Q19.5 21.5 18 22 Q17 22.5 16 21 L6.5 11.5 Q3 11.5 3 7 Z" fill="#111"/>
   <path d="M21 2.5 L22 3.5 L14 11.5 L15 12.5 L7 21 Q5.5 22 5 21 Q4.5 20 5.5 19 L12.5 11 L13.5 12 Z" fill="#111"/>
   <circle cx="17.2" cy="20.6" r="0.9" fill="#ddd"/>
 </svg>
 <div class="t" style="left:95px;top:14px;font-size:11.7px;color:#fff">Win 10 Tool</div>
 <div class="abs" style="left:61px;top:38px;width:152px;height:2px;background:#76b9ed"></div>
 <!-- This PC -->
 <svg class="abs" style="left:228px;top:8px" width="24" height="24" viewBox="0 0 24 24">
   <path d="M7 1 L23 4.5 L23 16 L7 14.5 Z" fill="#e6f3fb"/>
   <path d="M8 2.3 L22 5.5 L22 15 L8 13.6 Z" fill="url(#mon)"/>
   <path d="M13 15 L19 15.6 L20.5 17.5 L14.5 17 Z" fill="#d9e4ea"/>
   <path d="M0.5 18.5 L5 17 L17 20 L12.5 22 Z" fill="#f1f5f8"/>
 </svg>
 <div class="t" style="left:256px;top:14px;font-size:12px;color:#fff">Этот компьютер</div>
 <div class="abs" style="left:222px;top:38px;width:152px;height:2px;background:#76b9ed"></div>
 <!-- Properties (active) -->
 <div class="abs" style="left:378px;top:0;width:160px;height:40px;background:#354850"></div>
 <svg class="abs" style="left:388px;top:14px" width="23" height="15" viewBox="0 0 30 20" preserveAspectRatio="none"><use href="#drvC" width="30" height="24" y="-2"/></svg>
 <div class="t" style="left:416px;top:14px;font-size:11.6px;color:#fff">Свойства: Локаль...</div>
 <div class="abs" style="left:378px;top:38px;width:160px;height:2px;background:#76b9ed"></div>
 <!-- tray -->
 <div class="abs" style="left:1697px;top:12px;width:16px;height:16px;background:#262a2c"></div>
 <svg class="abs" style="left:1698px;top:16px" width="13" height="9" viewBox="0 0 13 9">
   <path d="M3 0 H13 V9 H3 Q0 7 0 4.5 Q0 2 3 0 Z" fill="#76b900"/>
   <path d="M2.5 4.5 Q5 1.5 8 2.5 Q10 3.5 9 5.5 Q7.5 7.2 5 6 M4.5 4.5 Q6.5 3 7.5 4.5" fill="none" stroke="#1a1a1a" stroke-width="0.9"/>
 </svg>
 <svg class="abs" style="left:1721px;top:13px" width="17" height="14" viewBox="0 0 17 14">
   <path d="M4.5 1.5 H16 V10 H1.5 V5.5" fill="none" stroke="#fff" stroke-width="1.1"/>
   <rect x="0.5" y="0.5" width="4" height="4" fill="none" stroke="#fff" stroke-width="1"/>
   <path d="M2.5 4.5 V13.5 M8.8 10 V13 M5 13.4 H12.5" stroke="#fff" stroke-width="1.1"/>
 </svg>
 <svg class="abs" style="left:1745px;top:12px" width="17" height="15" viewBox="0 0 17 15">
   <path d="M0.6 5 H3.5 L7.5 1 V14 L3.5 10 H0.6 Z" fill="none" stroke="#fff" stroke-width="1.1"/>
   <path d="M9.5 5.2 Q10.8 7.5 9.5 9.8 M11.6 3.3 Q14 7.5 11.6 11.7 M13.8 1.4 Q17.2 7.5 13.8 13.6" fill="none" stroke="#fff" stroke-width="1.1"/>
 </svg>
 <div class="t" style="left:1771px;top:14px;font-size:10.6px;color:#fff">ENG</div>
 <div class="t" style="left:1807px;top:5px;width:54px;text-align:center;font-size:10.8px;color:#fff">13:01</div>
 <div class="t" style="left:1806px;top:23px;width:56px;text-align:center;font-size:10.8px;color:#fff">26.02.2024</div>
 <svg class="abs" style="left:1879px;top:12px" width="17" height="17" viewBox="0 0 17 17">
   <path d="M0.6 0.6 H15.6 V11.6 H10 L8.1 13.8 L6.2 11.6 H0.6 Z" fill="none" stroke="#fff" stroke-width="1.1"/>
 </svg>
 <div class="abs" style="left:1915px;top:0;width:1px;height:40px;background:#4a5560"></div>
</div>
</body></html>
